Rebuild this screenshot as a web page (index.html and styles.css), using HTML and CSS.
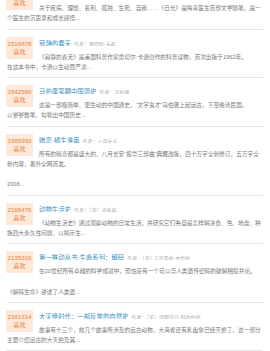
FILE: index.html
```html
<!DOCTYPE html>
<html lang="zh-CN">
<head>
  <meta charset="UTF-8">
  <meta name="viewport" content="width=device-width, initial-scale=1.0">
  <title>热门书单</title>
  <link rel="stylesheet" href="styles.css">
</head>
<body>

  <ul class="book-list">
    <li class="book">
      <div class="likes"><span class="likes-num">1498762</span><span>喜欢</span></div>
      <div class="book-head"><a href="#" class="book-title">日光</a><span class="book-author">作者：梅青</span></div>
      <p class="book-desc">关于疾病、理想、名利、孤独、生死、自我……《日光》是梅青医生首部文学随笔，是一个医生的沉思录和成长感悟...</p>
    </li>
    <li class="book">
      <div class="likes"><span class="likes-num">1516878</span><span>喜欢</span></div>
      <div class="book-head"><a href="#" class="book-title">寂静的春天</a><span class="book-author">作者：蕾切尔·卡森</span></div>
      <p class="book-desc">《寂静的春天》是美国科普作家蕾切尔·卡逊创作的科普读物，首次出版于1962年。<br>在这本书中，卡逊以生动而严肃...</p>
    </li>
    <li class="book">
      <div class="likes"><span class="likes-num">1542580</span><span>喜欢</span></div>
      <div class="book-head"><a href="#" class="book-title">马伯庸笑翻中国简史</a><span class="book-author">作者：马伯庸</span></div>
      <p class="book-desc">这是一部极简单、更生动的中国通史，“文字鬼才”马伯庸上起远古，下至晚清民国，<br>以寥寥数笔，勾勒出中国历史...</p>
    </li>
    <li class="book">
      <div class="likes"><span class="likes-num">1585993</span><span>喜欢</span></div>
      <div class="book-head"><a href="#" class="book-title">暗恋·橘生淮南</a><span class="book-author">作者：八月长安</span></div>
      <p class="book-desc">所有的暗恋都是盛大的，八月长安“振华三部曲”典藏改版，四十万字全新修订，五万字全新内容，番外全网首发。<br><br>2008...</p>
    </li>
    <li class="book">
      <div class="likes"><span class="likes-num">2166476</span><span>喜欢</span></div>
      <div class="book-head"><a href="#" class="book-title">动物生活史</a><span class="book-author">作者：［英］道格森</span></div>
      <p class="book-desc">《动物生活史》通过观察动物的日常生活，并研究它们各自是怎样解决食、色、地盘、种族四大永久性问题，以揭示生...</p>
    </li>
    <li class="book">
      <div class="likes"><span class="likes-num">2135316</span><span>喜欢</span></div>
      <div class="book-head"><a href="#" class="book-title">第一推动丛书·生命系列：解码</a><span class="book-author">作者：［美］J.克雷格·文特尔</span></div>
      <p class="book-desc">在20世纪所有卓越的科学成就中，恐怕没有一个可以与人类遗传密码的破解相提并论。<br><br>《解码生命》讲述了人类遗...</p>
    </li>
    <li class="book">
      <div class="likes"><span class="likes-num">2181314</span><span>喜欢</span></div>
      <div class="book-head"><a href="#" class="book-title">大灭绝时代：一部反常的自然史</a><span class="book-author">作者：［美］伊丽莎白·科尔伯特</span></div>
      <p class="book-desc">故事有十三个，前几个故事所涉及的远古动物，大海雀还有乳齿象已经灭绝了，这一部分主要介绍远古的大灭绝及其...</p>
    </li>
  </ul>

</body>
</html>
```

FILE: styles.css
```css
* {
  margin: 0;
  padding: 0;
  box-sizing: border-box;
}

body {
  font-family: "Liberation Sans", "Noto Sans CJK SC", sans-serif;
  background-color: #fff;
  color: #808080;
  overflow: hidden;
}

.book-list {
  list-style: none;
  margin-top: -19px;
}

.book {
  margin: 0 7px;
  padding: 6px 0 5px;
  border-bottom: 1px solid #e6e6e6;
}

.likes {
  float: left;
  width: 27px;
  margin: 1px 6px 0 -1px;
  padding: 3px 0;
  background-color: #fde8da;
  color: #e8843a;
  text-align: center;
  font-size: 6.2px;
  line-height: 8px;
}

.likes span {
  display: block;
}

.book-head {
  height: 10px;
  line-height: 10px;
  white-space: nowrap;
  overflow: hidden;
}

.book-title {
  font-size: 6.4px;
  color: #3b8fc4;
  text-decoration: none;
}

.book-author {
  margin-left: 3px;
  font-size: 5px;
  color: #aaa;
}

.book-desc {
  margin-top: 6px;
  font-size: 5.7px;
  line-height: 10.25px;
  color: #7a7a7a;
}
```
